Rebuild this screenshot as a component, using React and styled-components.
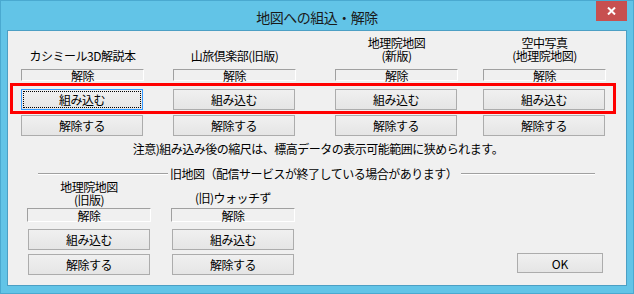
import React from 'react'
import styled, { createGlobalStyle, css } from 'styled-components'

const FONT = `"Noto Sans CJK JP", "Liberation Sans", sans-serif`

const GlobalStyle = createGlobalStyle`
  html, body {
    margin: 0;
    padding: 0;
    background: #62c4e7;
  }
`

const topColumns = [
  ['カシミール3D解説本'],
  ['山旅倶楽部(旧版)'],
  ['地理院地図', '(新版)'],
  ['空中写真', '(地理院地図)']
]

const oldColumns = [
  { lines: ['地理院地図', '(旧版)'] },
  { lines: ['(旧)ウォッチず'], lift: true }
]

const App = () => (
  <>
    <GlobalStyle />
    <Window>
      <TitleBar>
        <Title>地図への組込・解除</Title>
        <CloseButton>
          <svg width="9" height="8" viewBox="0 0 9 8">
            <path d="M1 0.5 L8 7.5 M8 0.5 L1 7.5" stroke="#fff" strokeWidth="2" />
          </svg>
        </CloseButton>
      </TitleBar>

      <Client>
        <HeaderRow>
          {topColumns.map((lines) => (
            <ColHeader key={lines[0]}>
              {lines.map((l) => <div key={l}>{l}</div>)}
            </ColHeader>
          ))}
        </HeaderRow>

        <StatusRow>
          {topColumns.map((lines) => (
            <Status key={lines[0]}>解除</Status>
          ))}
        </StatusRow>

        <Highlight>
          <ButtonRow>
            {topColumns.map((lines, i) => (
              <Button key={lines[0]} $focused={i === 0}>組み込む</Button>
            ))}
          </ButtonRow>
        </Highlight>

        <ButtonRow $second>
          {topColumns.map((lines) => (
            <Button key={lines[0]}>解除する</Button>
          ))}
        </ButtonRow>

        <Notice>注意)組み込み後の縮尺は、標高データの表示可能範囲に狭められます。</Notice>

        <GroupHeader>
          <Rule $left />
          <GroupTitle>旧地図（配信サービスが終了している場合があります）</GroupTitle>
          <Rule />
        </GroupHeader>

        <Bottom>
          <OldGrid>
            {oldColumns.map(({ lines, lift }) => (
              <OldColumn key={lines[0]}>
                <OldHeader $lift={lift}>
                  {lines.map((l) => <div key={l}>{l}</div>)}
                </OldHeader>
                <Status $tall>解除</Status>
                <Button $mt={7}>組み込む</Button>
                <Button $mt={4}>解除する</Button>
              </OldColumn>
            ))}
          </OldGrid>
          <OkButton>OK</OkButton>
        </Bottom>
      </Client>
    </Window>
  </>
)

const Window = styled.div`
  box-sizing: border-box;
  width: 634px;
  height: 294px;
  border: 1px solid #4aa9d0;
  background: #62c4e7;
  padding: 0 6px 7px;
  display: flex;
  flex-direction: column;
  font-family: ${FONT};
`

const TitleBar = styled.div`
  position: relative;
  height: 29px;
  display: flex;
  justify-content: center;
  align-items: flex-start;
`

const Title = styled.div`
  margin-top: 8px;
  font-size: 14px;
  line-height: 16px;
  letter-spacing: -0.5px;
  color: #1a1a1a;
`

const CloseButton = styled.div`
  position: absolute;
  top: 0;
  right: 0;
  width: 31px;
  height: 20px;
  background: #c75050;
  display: flex;
  align-items: center;
  justify-content: center;
`

const Client = styled.div`
  flex: 1;
  border: 1px solid #4c9fc4;
  background: #f0f0f0;
  color: #000;
  font-size: 12px;
  line-height: 13px;
  letter-spacing: -0.5px;
  display: flex;
  flex-direction: column;
`

const rowGrid = css`
  display: grid;
  grid-template-columns: 152px 162px 148px 123px;
  padding-left: 13px;
`

const HeaderRow = styled.div`
  ${rowGrid};
  margin-top: 5px;
  height: 26px;
`

const ColHeader = styled.div`
  width: 123px;
  text-align: center;
  align-self: end;
  white-space: nowrap;
`

const StatusRow = styled.div`
  ${rowGrid};
  margin-top: 7px;
`

const Status = styled.div`
  box-sizing: border-box;
  width: ${({ $tall }) => ($tall ? '124px' : '123px')};
  margin-left: ${({ $tall }) => ($tall ? '-1px' : '0')};
  height: ${({ $tall }) => ($tall ? '14px' : '12px')};
  line-height: ${({ $tall }) => ($tall ? '13px' : '11px')};
  border-top: 1px solid #a0a0a0;
  border-left: 1px solid #a0a0a0;
  border-right: 1px solid #fff;
  border-bottom: 1px solid #fff;
  text-align: center;
`

const Highlight = styled.div`
  margin: 2px 10px 0 2px;
  border: 3px solid #ff0000;
  padding: 3px 0 1px;

  > div {
    padding-left: 8px;
  }
`

const ButtonRow = styled.div`
  ${rowGrid};
  margin-top: ${({ $second }) => ($second ? '1px' : '0')};
`

const Button = styled.div`
  box-sizing: border-box;
  width: 122px;
  height: 21px;
  margin-top: ${({ $mt }) => ($mt ? `${$mt}px` : '0')};
  border: 1px solid ${({ $focused }) => ($focused ? '#3399ff' : '#acacac')};
  background: linear-gradient(#f0f0f0, #e5e5e5);
  display: flex;
  align-items: center;
  justify-content: center;
  ${({ $focused }) => $focused && css`
    outline: 1px dotted #000;
    outline-offset: -3px;
  `}
`

const Notice = styled.div`
  margin-top: 6px;
  text-align: center;
  padding-left: 2px;
`

const GroupHeader = styled.div`
  margin-top: 12px;
  display: flex;
  align-items: center;
  padding: 0 31px 0 30px;
`

const Rule = styled.div`
  height: 0;
  border-top: 1px solid #a0a0a0;
  border-bottom: 1px solid #fff;
  ${({ $left }) => ($left ? 'width: 130px;' : 'flex: 1;')}
`

const GroupTitle = styled.div`
  margin: 0 4px 0 2px;
  white-space: nowrap;
`

const Bottom = styled.div`
  display: flex;
  align-items: flex-end;
  justify-content: space-between;
  padding-right: 23px;
`

const OldGrid = styled.div`
  display: grid;
  grid-template-columns: 122px 122px;
  column-gap: 22px;
  padding-left: 20px;
`

const OldColumn = styled.div`
  display: flex;
  flex-direction: column;
`

const OldHeader = styled.div`
  height: 26px;
  margin-bottom: 2px;
  display: flex;
  flex-direction: column;
  justify-content: flex-end;
  align-items: center;
  white-space: nowrap;
  padding-bottom: ${({ $lift }) => ($lift ? '2px' : '0')};
  box-sizing: border-box;
`

const OkButton = styled.div`
  box-sizing: border-box;
  width: 86px;
  height: 20px;
  margin-bottom: 2px;
  border: 1px solid #acacac;
  background: linear-gradient(#f0f0f0, #e5e5e5);
  display: flex;
  align-items: center;
  justify-content: center;
  letter-spacing: 0;
`

export default App
